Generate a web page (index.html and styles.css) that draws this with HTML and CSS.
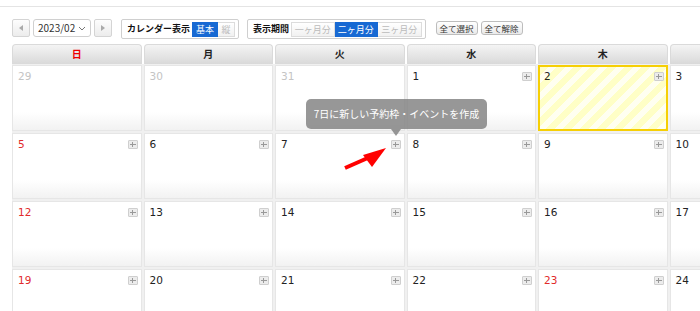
FILE: index.html
```html
<!DOCTYPE html>
<html lang="ja">
<head>
  <meta charset="UTF-8" />
  <title>カレンダー</title>
  <link rel="stylesheet" href="styles.css">
</head>
<body>

  <div class="topline"></div>

  <div class="toolbar">
    <button class="nav-btn"><span class="tri-left"></span></button>
    <div class="month-select">
      <span>2023/02</span>
      <svg width="8" height="5" viewBox="0 0 8 5"><path d="M1 1 L4 4 L7 1" fill="none" stroke="#777" stroke-width="1"/></svg>
    </div>
    <button class="nav-btn"><span class="tri-right"></span></button>

    <div class="group first">
      <span class="group-label">カレンダー表示</span>
      <div class="seg">
        <span class="seg-btn active">基本</span>
        <span class="seg-btn narrow">縦</span>
      </div>
    </div>

    <div class="group">
      <span class="group-label">表示期間</span>
      <div class="seg">
        <span class="seg-btn wide">一ヶ月分</span>
        <span class="seg-btn wide active">二ヶ月分</span>
        <span class="seg-btn wide">三ヶ月分</span>
      </div>
    </div>

    <button class="small-btn select-all">全て選択</button>
    <button class="small-btn">全て解除</button>
  </div>

  <div class="calendar">
    <div class="cal-head">
      <div class="head-cell sun">日</div>
      <div class="head-cell">月</div>
      <div class="head-cell">火</div>
      <div class="head-cell">水</div>
      <div class="head-cell">木</div>
      <div class="head-cell">金</div>
      <div class="head-cell">土</div>
    </div>
    <div class="cal-body" id="calBody"></div>
  </div>

  <div class="tooltip">7日に新しい予約枠・イベントを作成</div>

  <svg class="red-arrow" width="50" height="35" viewBox="0 0 50 35">
    <line x1="5" y1="28" x2="30" y2="17" stroke="#f00" stroke-width="4"/>
    <polygon points="46,8 23,15 32,27" fill="#f00"/>
  </svg>

  <script>
    const days = [
      [29, "other"], [30, "other"], [31, "other"], [1], [2, "today"], [3], [4],
      [5, "sun"], [6], [7], [8], [9], [10], [11],
      [12, "sun"], [13], [14], [15], [16], [17], [18],
      [19, "sun"], [20], [21], [22], [23, "sun"], [24], [25],
      [26, "sun"], [27], [28], [1], [2], [3], [4]
    ];
    const body = document.getElementById("calBody");
    days.forEach(([num, kind]) => {
      const cell = document.createElement("div");
      cell.className = "day-cell" + (kind === "today" ? " today" : "");
      const numClass = kind === "other" ? "num other" : kind === "sun" ? "num sun" : "num";
      const plus = kind === "other" ? "" : `<span class="plus"></span>`;
      cell.innerHTML = `<div class="day-top"><span class="${numClass}">${num}</span>${plus}</div>`;
      body.appendChild(cell);
    });
  </script>

</body>
</html>
```

FILE: styles.css
```css
* {
  box-sizing: border-box;
}

body {
  margin: 0;
  font-family: "Noto Sans CJK JP", "Noto Sans", sans-serif;
  color: #222;
  background: #fff;
  overflow: hidden;
  position: relative;
  width: 700px;
  height: 311px;
}

.topline {
  margin-top: 6px;
  height: 1px;
  background: #e4e4e4;
}

.toolbar {
  display: flex;
  align-items: flex-start;
  margin-top: 12px;
  padding-left: 12px;
  height: 20px;
}

.nav-btn {
  width: 18px;
  height: 18px;
  margin: 0;
  padding: 0;
  border: 1px solid #d4d4d4;
  border-radius: 2px;
  background: linear-gradient(#fdfdfd, #ececec);
  display: flex;
  align-items: center;
  justify-content: center;
}

.tri-left,
.tri-right {
  width: 0;
  height: 0;
  border-top: 3px solid transparent;
  border-bottom: 3px solid transparent;
}

.tri-left {
  border-right: 4px solid #aaa;
}

.tri-right {
  border-left: 4px solid #aaa;
}

.month-select {
  width: 58px;
  height: 18px;
  margin: 0 3px;
  padding: 0 4px;
  border: 1px solid #d0d0d0;
  border-radius: 3px;
  display: flex;
  align-items: center;
  justify-content: space-between;
  font-size: 10px;
  line-height: 16px;
  color: #333;
}

.group {
  display: flex;
  align-items: center;
  height: 20px;
  margin-left: 8px;
  padding: 0 3px 0 5px;
  border: 1px solid #cfcfcf;
  border-radius: 2px;
  gap: 2px;
}

.group.first {
  margin-left: 9px;
}

.group-label {
  font-size: 9px;
  font-weight: bold;
  line-height: 14px;
  color: #111;
  white-space: nowrap;
}

.seg {
  display: flex;
  height: 15px;
}

.seg-btn {
  width: 26px;
  height: 15px;
  border: 1px solid #dcdcdc;
  background: linear-gradient(#fff, #f1f1f1);
  color: #bbb;
  font-size: 9px;
  line-height: 13px;
  text-align: center;
  white-space: nowrap;
}

.seg-btn + .seg-btn {
  border-left: none;
}

.seg-btn.narrow {
  width: 17px;
}

.seg-btn.wide {
  width: 43.5px;
}

.seg-btn.active {
  background: #1769d3;
  border-color: #1769d3;
  color: #fff;
}

.small-btn {
  height: 14px;
  margin: 2px 0 0 3px;
  padding: 0 3px;
  border: 1px solid #bdbdbd;
  border-radius: 3px;
  background: linear-gradient(#fff, #eaeaea);
  font-family: inherit;
  font-size: 8.5px;
  line-height: 12px;
  color: #333;
  white-space: nowrap;
}

.small-btn.select-all {
  margin-left: 10px;
}

.calendar {
  margin-top: 5px;
  padding-left: 12px;
}

.cal-head {
  display: grid;
  grid-template-columns: repeat(7, 129.5px);
  column-gap: 2px;
}

.head-cell {
  height: 20px;
  border-radius: 4px 4px 0 0;
  border: 1px solid #dadada;
  border-bottom: none;
  background: linear-gradient(#f4f4f4, #d9d9d9);
  text-align: center;
  font-size: 10px;
  font-weight: bold;
  line-height: 18px;
  color: #222;
}

.head-cell.sun {
  color: #e00;
}

.cal-body {
  display: grid;
  grid-template-columns: repeat(7, 129.5px);
  grid-auto-rows: 66px;
  gap: 2px;
  width: 918.5px;
  background: #f0f0f0;
  border-top: 1px solid #f0f0f0;
}

.day-cell {
  border: 1px solid #e6e6e6;
  background: linear-gradient(#fff 72%, #f2f2f2 100%);
}

.day-cell.today {
  border: 2px solid #f6cf05;
  background: repeating-linear-gradient(135deg, #ffffc6 0 6px, #fffff0 6px 12px);
}

.day-top {
  display: flex;
  justify-content: space-between;
  align-items: flex-start;
  padding: 3px 3px 0 5px;
}

.today .day-top {
  padding: 2px 2px 0 4px;
}

.num {
  font-family: "DejaVu Sans", sans-serif;
  font-size: 10.5px;
  line-height: 14px;
}

.num.sun {
  color: #e12b2b;
}

.num.other {
  color: #c4c4c4;
}

.plus {
  position: relative;
  width: 10px;
  height: 9px;
  margin-top: 3px;
  border: 1px solid #cfcfcf;
  border-radius: 1px;
  background: #ececec;
}

.plus::before,
.plus::after {
  content: "";
  position: absolute;
  background: #999;
}

.plus::before {
  left: 1px;
  right: 1px;
  top: 3px;
  height: 1px;
}

.plus::after {
  top: 1px;
  bottom: 1px;
  left: 3px;
  width: 1px;
}

.tooltip {
  position: absolute;
  left: 306px;
  top: 99px;
  width: 181px;
  height: 30px;
  border-radius: 5px;
  background: rgba(128, 128, 128, 0.82);
  color: #fff;
  font-size: 10px;
  line-height: 30px;
  text-align: center;
}

.tooltip::after {
  content: "";
  position: absolute;
  left: 85px;
  top: 30px;
  border-left: 5px solid transparent;
  border-right: 5px solid transparent;
  border-top: 7px solid rgba(128, 128, 128, 0.82);
}

.red-arrow {
  position: absolute;
  left: 340px;
  top: 140px;
}
```
